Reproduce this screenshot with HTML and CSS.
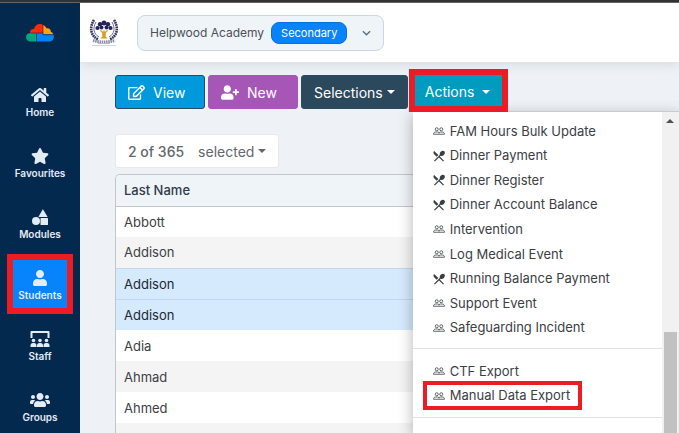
FILE: index.html
```html
<!DOCTYPE html>
<html lang="en">
<head>
    <meta charset="UTF-8">
    <meta name="viewport" content="width=device-width, initial-scale=1">
    <title>Students</title>
    <link rel="stylesheet" href="styles.css">
</head>
<body>
    <!-- Shared icons -->
    <svg class="sprite" aria-hidden="true">
        <symbol id="people" viewBox="0 0 24 16">
            <g fill="none" stroke="currentColor" stroke-width="1.6">
                <circle cx="7.5" cy="4.5" r="3"/>
                <circle cx="16.5" cy="4.5" r="3"/>
                <path d="M1 14.5c0-3 2-4.500 4.500-4.500h4c1.500 0 2.500 1 2.500 2.500c0-1.500 1-2.500 2.500-2.500h4c2.500 0 4.500 1.500 4.500 4.500z"/>
            </g>
        </symbol>
        <symbol id="cutlery" viewBox="2 2 20 20">
            <path fill="currentColor" d="M8.100 13.340l2.830-2.830L3.910 3.500c-1.560 1.560-1.560 4.090 0 5.660l4.190 4.180zm6.780-1.810c1.530.71 3.680.21 5.270-1.380 1.910-1.910 2.280-4.650.81-6.120-1.460-1.460-4.200-1.100-6.120.81-1.590 1.590-2.090 3.740-1.380 5.270L3.700 19.870l1.410 1.410L12 14.410l6.880 6.880 1.410-1.410L13.410 13l1.470-1.470z"/>
        </symbol>
    </svg>

    <div class="topline"></div>
    <div class="app">
        <nav class="sidebar">
            <a href="#" class="brand" aria-label="Dashboard">
                <svg viewBox="0 0 28 18" width="28" height="18">
                    <path fill="#ff2a0c" d="M4 8.500C4 6 6 4.500 8 5c.5-3 3-5 5.500-5 1.500 0 2.500.3 3.500 1v9H4z"/>
                    <path fill="#ffa40d" d="M17 1c2 1 3 2 3.500 3.500 2-.8 4.500 1 4.300 3.200 1.200.5 2 1.300 2.600 2.800H17z"/>
                    <path fill="#00a77d" d="M10.500 9v8.500H5a4.500 4.500 0 0 1-5-4.300C0 10.500 2 9 4.500 9z"/>
                    <path fill="#0782ff" d="M10.500 9H17v1.500h10.400c1.500 3.500-.8 7-4.400 7H10.500z"/>
                    <path fill="none" stroke="#04294f" stroke-width=".6" d="M3 9h14M10.500 9v9M17 0v10.800h11"/>
                </svg>
            </a>
            <a href="#" class="nav-item">
                <svg class="nav-icon" viewBox="0 0 576 512"><path d="M280.370 148.260L96 300.110V464a16 16 0 0 0 16 16l112.060-.29a16 16 0 0 0 15.920-16V368a16 16 0 0 1 16-16h64a16 16 0 0 1 16 16v95.640a16 16 0 0 0 16 16.050L464 480a16 16 0 0 0 16-16V300L295.670 148.260a12.190 12.190 0 0 0-15.300 0zM571.600 251.470L488 182.560V44.050a12 12 0 0 0-12-12h-56a12 12 0 0 0-12 12v72.610L318.470 43a48 48 0 0 0-61 0L4.340 251.470a12 12 0 0 0-1.600 16.900l25.500 31A12 12 0 0 0 45.150 301l235.220-193.740a12.190 12.190 0 0 1 15.300 0L530.900 301a12 12 0 0 0 16.900-1.600l25.500-31a12 12 0 0 0-1.700-16.930z"/></svg>
                <span>Home</span>
            </a>
            <a href="#" class="nav-item">
                <svg class="nav-icon" viewBox="0 0 576 512"><path d="M259.300 17.800L194 150.200 47.900 171.500c-26.200 3.800-36.700 36.100-17.700 54.600l105.700 103-25 145.500c-4.500 26.300 23.200 46 46.400 33.700L288 439.600l130.700 68.700c23.200 12.200 50.900-7.400 46.400-33.700l-25-145.500 105.700-103c19-18.500 8.500-50.800-17.700-54.600L382 150.200 316.700 17.800c-11.700-23.600-45.600-23.900-57.400 0z"/></svg>
                <span>Favourites</span>
            </a>
            <a href="#" class="nav-item">
                <svg class="nav-icon" viewBox="0 0 576 512"><circle cx="160" cy="384" r="128"/><path d="M368 20q12-24 24 0l132 216q8 20-12 20H256q-20 0-12-20zM320 288h208q16 0 16 16v192q0 16-16 16H320q-16 0-16-16V304q0-16 16-16z"/></svg>
                <span>Modules</span>
            </a>
            <a href="#" class="nav-item active marked">
                <svg class="nav-icon" viewBox="0 0 448 512"><path d="M224 256c70.700 0 128-57.300 128-128S294.700 0 224 0 96 57.300 96 128s57.300 128 128 128zm89.600 32h-16.700c-22.200 10.200-46.900 16-72.900 16s-50.600-5.800-72.900-16h-16.700C60.200 288 0 348.200 0 422.400V464c0 26.500 21.500 48 48 48h352c26.500 0 48-21.500 48-48v-41.600c0-74.200-60.200-134.400-134.400-134.400z"/></svg>
                <span>Students</span>
            </a>
            <a href="#" class="nav-item">
                <svg class="nav-icon" viewBox="0 0 20 16"><path d="M1.500 0h17q1 0 1 1v6h-2V2h-15v5h-2V1q0-1 1-1z"/><circle cx="3.500" cy="9.500" r="1.800"/><circle cx="10" cy="9.500" r="1.800"/><circle cx="16.500" cy="9.500" r="1.800"/><path d="M.5 16v-1.500q0-2.500 2.500-2.500h1q2.500 0 2.500 2.500V16zM7 16v-1.500q0-2.500 2.500-2.500h1q2.500 0 2.500 2.500V16zM13.500 16v-1.500q0-2.500 2.500-2.500h1q2.500 0 2.500 2.500V16z"/></svg>
                <span>Staff</span>
            </a>
            <a href="#" class="nav-item">
                <svg class="nav-icon" viewBox="0 0 640 512"><path d="M96 224c35.300 0 64-28.700 64-64s-28.700-64-64-64-64 28.700-64 64 28.700 64 64 64zm448 0c35.300 0 64-28.700 64-64s-28.700-64-64-64-64 28.700-64 64 28.700 64 64 64zm32 32h-64c-17.600 0-33.500 7.100-45.100 18.600 40.300 22.100 68.900 62 75.100 109.400h66c17.700 0 32-14.300 32-32v-32c0-35.300-28.700-64-64-64zm-256 0c61.900 0 112-50.100 112-112S381.900 32 320 32 208 82.100 208 144s50.100 112 112 112zm76.800 32h-8.300c-20.800 10-43.900 16-68.500 16s-47.600-6-68.500-16h-8.300C179.600 288 128 339.600 128 403.200V432c0 26.500 21.500 48 48 48h288c26.500 0 48-21.500 48-48v-28.800c0-63.600-51.600-115.200-115.200-115.200zm-223.700-13.400C161.500 263.100 145.600 256 128 256H64c-35.300 0-64 28.700-64 64v32c0 17.700 14.300 32 32 32h65.900c6.300-47.400 34.900-87.300 75.200-109.400z"/></svg>
                <span>Groups</span>
            </a>
        </nav>

        <div class="main">
            <header class="header">
                <svg class="crest" viewBox="0 0 30 28" width="30" height="28">
                    <g fill="none" stroke="#34335f" stroke-width="2.600" stroke-dasharray="1.700 .6">
                        <path d="M5 1C.5 8 1 17 9.500 20.500M25 1c4.500 7 4 16-4.500 19.500"/>
                    </g>
                    <g fill="none" stroke="#6c6b91" stroke-width="1"><path d="M7 3C3.500 9 4.500 15 10 18M23 3c3.500 6 2.500 12-3 15"/></g>
                    <g fill="#25245a">
                        <circle cx="15" cy="4" r="2.500"/><circle cx="11" cy="5.200" r="2.200"/><circle cx="19" cy="5.200" r="2.200"/>
                        <circle cx="8.500" cy="9" r="2.100"/><circle cx="21.500" cy="9" r="2.100"/><circle cx="12.500" cy="8.500" r="2"/><circle cx="17.500" cy="8.500" r="2"/>
                    </g>
                    <path fill="#d2a024" d="M10.500 11q3 .2 3.700 2l.8-3 .8 3q.7-1.800 3.700-2-2.300 2-2.800 3.500v3l2 2h-7.400l2-2v-3q-.5-1.500-2.800-3.500z"/>
                    <path fill="none" stroke="#8b8aa3" stroke-width="3" stroke-dasharray="1.500 .7" d="M4 21.500q11 3 22 0"/>
                    <path fill="none" stroke="#b9b8c8" stroke-width="1" d="M9 24.500h12"/>
                    <path fill="none" stroke="#d5d5df" stroke-width="1" d="M3 26.500h24"/>
                </svg>
                <button type="button" class="school-picker">
                    <span>Helpwood Academy</span>
                    <span class="badge">Secondary</span>
                    <svg class="chevron" viewBox="0 0 10 6" width="9" height="6"><path fill="none" stroke="#5d6d7c" stroke-width="1.500" d="M1 1l4 4 4-4"/></svg>
                </button>
            </header>

            <main class="content">
                <div class="toolbar">
                    <button type="button" class="btn btn-view">
                        <svg viewBox="0 0 576 512" width="17" height="15"><path d="M402.300 344.900l32-32c5-5 13.700-1.500 13.700 5.700V464c0 26.500-21.500 48-48 48H48c-26.500 0-48-21.500-48-48V112c0-26.500 21.500-48 48-48h273.500c7.100 0 10.700 8.600 5.700 13.700l-32 32c-1.500 1.500-3.500 2.300-5.700 2.300H48v352h352V350.500c0-2.100.8-4.100 2.300-5.600zm156.600-201.800L296.300 405.700l-90.400 10c-26.200 2.900-48.500-19.200-45.600-45.600l10-90.400L432.900 17.100c22.900-22.900 59.900-22.900 82.700 0l43.200 43.200c22.900 22.900 22.900 60 .1 82.800zM460.100 174L402 115.900 216.200 301.800l-7.300 65.300 65.300-7.300L460.100 174zm64.800-79.700l-43.200-43.200c-4.100-4.100-10.800-4.100-14.800 0L436 82l58.100 58.100 30.900-30.900c4-4.200 4-10.800-.1-14.900z"/></svg>
                        View
                    </button>
                    <button type="button" class="btn btn-new">
                        <svg viewBox="0 0 640 512" width="18" height="15"><path d="M624 208h-64v-64c0-8.800-7.200-16-16-16h-32c-8.800 0-16 7.200-16 16v64h-64c-8.800 0-16 7.200-16 16v32c0 8.800 7.200 16 16 16h64v64c0 8.800 7.200 16 16 16h32c8.800 0 16-7.200 16-16v-64h64c8.800 0 16-7.200 16-16v-32c0-8.800-7.200-16-16-16zm-400 48c70.700 0 128-57.300 128-128S294.700 0 224 0 96 57.300 96 128s57.300 128 128 128zm89.600 32h-16.700c-22.200 10.200-46.900 16-72.900 16s-50.600-5.800-72.900-16h-16.700C60.200 288 0 348.200 0 422.400V464c0 26.500 21.500 48 48 48h352c26.500 0 48-21.500 48-48v-41.600c0-74.200-60.200-134.400-134.400-134.400z"/></svg>
                        New
                    </button>
                    <button type="button" class="btn btn-selections">Selections <span class="caret"></span></button>
                    <div class="dropdown">
                        <button type="button" class="btn btn-actions marked" aria-expanded="true">Actions <span class="caret"></span></button>
                        <div class="menu">
                            <div class="menu-body">
                                <ul class="menu-group events">
                                    <li><a href="#"><svg class="menu-icon"><use href="#people"/></svg>FAM Hours Bulk Update</a></li>
                                    <li><a href="#"><svg class="menu-icon"><use href="#cutlery"/></svg>Dinner Payment</a></li>
                                    <li><a href="#"><svg class="menu-icon"><use href="#cutlery"/></svg>Dinner Register</a></li>
                                    <li><a href="#"><svg class="menu-icon"><use href="#cutlery"/></svg>Dinner Account Balance</a></li>
                                    <li><a href="#"><svg class="menu-icon"><use href="#people"/></svg>Intervention</a></li>
                                    <li><a href="#"><svg class="menu-icon"><use href="#people"/></svg>Log Medical Event</a></li>
                                    <li><a href="#"><svg class="menu-icon"><use href="#cutlery"/></svg>Running Balance Payment</a></li>
                                    <li><a href="#"><svg class="menu-icon"><use href="#people"/></svg>Support Event</a></li>
                                    <li><a href="#"><svg class="menu-icon"><use href="#people"/></svg>Safeguarding Incident</a></li>
                                </ul>
                                <ul class="menu-group exports">
                                    <li><a href="#"><svg class="menu-icon"><use href="#people"/></svg>CTF Export</a></li>
                                    <li><a href="#" class="marked-item"><svg class="menu-icon"><use href="#people"/></svg>Manual Data Export</a></li>
                                </ul>
                            </div>
                            <div class="scroll-track">
                                <span class="scroll-arrow"></span>
                                <span class="scroll-thumb"></span>
                            </div>
                        </div>
                    </div>
                </div>

                <button type="button" class="selected-count"><strong>2 of 365</strong> selected <span class="caret"></span></button>

                <div class="table-wrap">
                    <table>
                        <thead>
                            <tr><th>Last Name</th></tr>
                        </thead>
                        <tbody>
                            <tr><td>Abbott</td></tr>
                            <tr><td>Addison</td></tr>
                            <tr class="selected"><td>Addison</td></tr>
                            <tr class="selected"><td>Addison</td></tr>
                            <tr><td>Adia</td></tr>
                            <tr><td>Ahmad</td></tr>
                            <tr><td>Ahmed</td></tr>
                            <tr><td></td></tr>
                        </tbody>
                    </table>
                </div>
            </main>
        </div>
    </div>
</body>
</html>
```
FILE: styles.css
```css
* {
    box-sizing: border-box;
}
body {
    display: flex;
    flex-direction: column;
    height: 100vh;
    margin: 0;
    overflow: hidden;
    background: #eef2f6;
    color: #3b4045;
    font-family: Inter, "Liberation Sans", sans-serif;
    font-size: 13px;
}
a {
    color: inherit;
    text-decoration: none;
}
button {
    font: inherit;
    cursor: pointer;
}
.sprite {
    display: none;
}
.topline {
    flex: none;
    height: 3px;
    background: #333;
    border-bottom: 1px solid #666;
}
.app {
    display: flex;
    flex: 1;
    min-height: 0;
}

/* Sidebar */
.sidebar {
    display: flex;
    flex-direction: column;
    align-items: center;
    flex: none;
    gap: 13px;
    width: 80px;
    background: #04294f;
    color: #e3ebf3;
}
.brand {
    flex: none;
    height: 61px;
    padding-top: 21px;
}
.nav-item {
    display: flex;
    flex-direction: column;
    align-items: center;
    flex: none;
    gap: 2px;
    width: 54px;
    height: 48px;
    padding-top: 10px;
    font-size: 10px;
    font-weight: 600;
    line-height: 14px;
}
.nav-icon {
    width: 20px;
    height: 16px;
    fill: currentColor;
}
.nav-item.active {
    background: #0784fb;
}
.marked {
    outline: 6px solid #ed1c24;
}

/* Header */
.main {
    display: flex;
    flex-direction: column;
    flex: 1;
    min-width: 0;
}
.header {
    display: flex;
    align-items: center;
    flex: none;
    gap: 18px;
    height: 59px;
    padding-left: 9px;
    background: #fff;
    box-shadow: 0 2px 12px rgba(30, 50, 70, 0.12);
}
.school-picker {
    display: flex;
    align-items: center;
    gap: 7px;
    height: 36px;
    padding: 0 12px;
    border: 1px solid #c9d6e3;
    border-radius: 8px;
    background: #eff4f9;
    color: #4b5056;
    font-size: 12px;
}
.badge {
    padding: 0 9px;
    border: 1px solid #0a6fe0;
    border-radius: 8px;
    background: #0784fb;
    color: #fff;
    font-size: 11px;
    line-height: 20px;
}
.chevron {
    margin-left: 8px;
}

/* Toolbar */
.content {
    flex: 1;
    min-height: 0;
    padding: 13px 0 0 35px;
    overflow: hidden;
}
.toolbar {
    display: flex;
    gap: 3px;
}
.btn {
    display: flex;
    align-items: center;
    gap: 8px;
    height: 34px;
    padding: 0 12px;
    border: 1px solid #2c4a60;
    border-radius: 3px;
    color: #fff;
    font-size: 14px;
}
.btn svg {
    fill: currentColor;
}
.btn-view,
.btn-new {
    width: 90px;
}
.btn-view {
    background: #0099de;
}
.btn-new {
    border-color: #a556b7;
    background: #a556b7;
}
.btn-selections {
    gap: 4px;
    background: #2b485c;
}
.btn-actions {
    position: relative;
    z-index: 2;
    width: 87px;
    height: 31px;
    padding: 2px 10px 0;
    border: 0;
    border-radius: 0;
    background: #009cbf;
}
.caret {
    border: 4px solid transparent;
    border-top-color: currentColor;
    border-bottom: 0;
}

/* Actions menu */
.dropdown {
    position: relative;
    margin-left: 4px;
}
.menu {
    position: absolute;
    top: 36px;
    left: -2px;
    z-index: 1;
    display: flex;
    width: calc(100vw - 413px);
    height: calc(100vh - 111px);
    border-top: 1px solid #c8ccd0;
    background: #fff;
    box-shadow: 0 4px 14px rgba(0, 0, 0, 0.3);
}
.menu-body {
    flex: 1;
}
.menu-group {
    display: grid;
    grid-auto-rows: 1fr;
    margin: 0;
    padding: 0 0 0 14px;
    border-bottom: 1px solid #e0e2e4;
    list-style: none;
}
.menu-group.events {
    height: 237px;
    padding-top: 7px;
    padding-bottom: 8px;
}
.menu-group.exports {
    height: 69px;
    padding-top: 10px;
    padding-bottom: 9px;
}
.menu-group li {
    display: flex;
    align-items: center;
}
.menu-group a {
    display: flex;
    align-items: center;
    gap: 5px;
    padding: 0 8px 0 6px;
    line-height: 21px;
}
.menu-icon {
    width: 12px;
    height: 12px;
}
.marked-item {
    outline: 4px solid #ed1c24;
}
.scroll-track {
    display: flex;
    flex-direction: column;
    align-items: center;
    flex: none;
    width: 17px;
    padding-top: 7px;
    background: #f1f1f1;
}
.scroll-arrow {
    border: 4px solid transparent;
    border-top: 0;
    border-bottom-color: #505050;
}
.scroll-thumb {
    flex: 1;
    width: 13px;
    margin-top: 209px;
    background: #c1c1c1;
}

/* Student list */
.selected-count {
    display: flex;
    align-items: center;
    gap: 4px;
    height: 34px;
    margin: 25px 0 6px;
    padding: 0 12px;
    border: 1px solid #e6e8ea;
    border-radius: 3px;
    background: #fff;
    color: #62676c;
    font-size: 14px;
}
.selected-count strong {
    margin-right: 10px;
    font-weight: 500;
}
.table-wrap {
    border: 1px solid #c3c6c9;
    border-right: 0;
    border-radius: 5px 0 0 0;
    overflow: hidden;
    background: #fff;
}
table {
    width: 100%;
    border-collapse: collapse;
}
th, td {
    height: 31px;
    padding: 0 8px;
    text-align: left;
}
th {
    border-bottom: 1px solid #c3c6c9;
    background: #eff4f9;
    color: #2f3a48;
    font-weight: 500;
}
tbody tr:nth-child(even) {
    background: #f4f4f4;
}
tbody tr.selected {
    background: #d6eafd;
    color: #1c2733;
}
.selected td {
    border-top: 1px solid #bfd8ee;
}
```
